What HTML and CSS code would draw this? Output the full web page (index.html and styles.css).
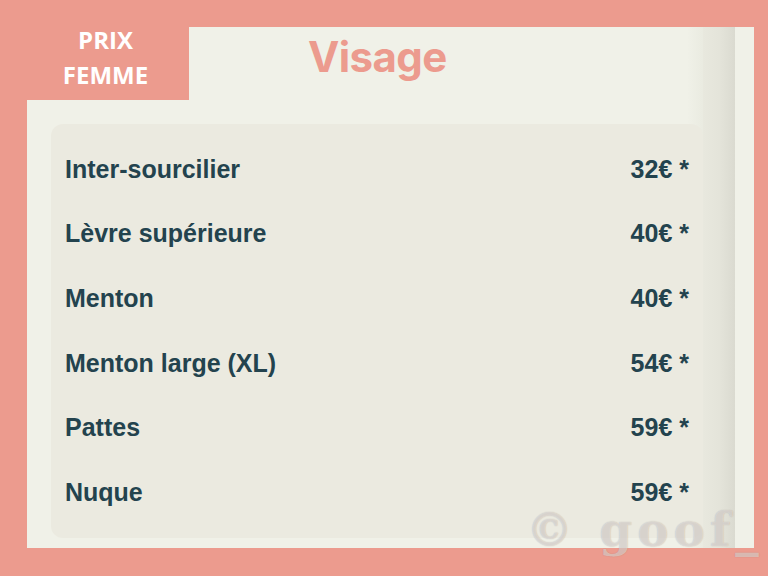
FILE: index.html
```html
<!DOCTYPE html>
<html lang="fr">
<head>
<meta charset="utf-8">
<title>Prix femme - Visage</title>
<link rel="stylesheet" href="styles.css">
</head>
<body>
<div class="frame">
  <div class="panel">
    <div class="main">
      <header class="header">
        <div class="label"><span class="label-text">PRIX<br>FEMME</span></div>
        <h1 class="title">Visage</h1>
      </header>
      <ul class="card">
        <li class="row"><span class="name">Inter-sourcilier</span><span class="price">32€ *</span></li>
        <li class="row"><span class="name">Lèvre supérieure</span><span class="price">40€ *</span></li>
        <li class="row"><span class="name">Menton</span><span class="price">40€ *</span></li>
        <li class="row"><span class="name">Menton large (XL)</span><span class="price">54€ *</span></li>
        <li class="row"><span class="name">Pattes</span><span class="price">59€ *</span></li>
        <li class="row"><span class="name">Nuque</span><span class="price">59€ *</span></li>
      </ul>
    </div>
    <div class="track"></div>
  </div>
</div>
<div class="watermark">© goof_</div>
</body>
</html>
```
FILE: styles.css
```css
html, body {
  margin: 0;
  padding: 0;
}
body {
  width: 768px;
  height: 576px;
  background: #ec9b8e;
  overflow: hidden;
  position: relative;
}
.frame {
  padding: 27px 14px 28px 27px;
}
.panel {
  display: flex;
  height: 521px;
  background: #f0f1e8;
}
.main {
  width: 676px;
  display: flex;
  flex-direction: column;
  background: linear-gradient(to right, rgba(0,0,0,0) 0, rgba(0,0,0,0) 660px, rgba(120,120,90,0.05) 676px);
}
.track {
  width: 32px;
  background: linear-gradient(to right, #e8e8de 0, #e4e4da 50%, #dadad0 100%);
}
.header {
  display: flex;
  align-items: flex-start;
  height: 97px;
}
.label {
  width: 162px;
  height: 73px;
  background: #ec9b8e;
  color: #ffffff;
  font-family: "Open Sans", sans-serif;
  font-weight: 700;
  font-size: 24px;
  line-height: 35px;
  text-align: center;
  padding-right: 5px;
  box-sizing: border-box;
}
.label-text {
  display: block;
  margin-top: -5px;
}
.title {
  margin: 0 0 0 119px;
  font-family: Inter, sans-serif;
  font-weight: 700;
  font-size: 42px;
  line-height: 42px;
  padding-top: 9px;
  letter-spacing: -0.6px;
  color: #ec9b8e;
}
.card {
  list-style: none;
  margin: 0 0 0 24px;
  padding: 13px 14px;
  background: #ebeae0;
  border-radius: 12px;
  height: 414px;
  box-sizing: border-box;
}
.row {
  display: flex;
  justify-content: space-between;
  align-items: center;
  height: 64.6px;
  font-family: "Liberation Sans", Arial, sans-serif;
  font-weight: 700;
  font-size: 25px;
  color: #23434e;
}
.watermark {
  position: absolute;
  left: 526px;
  top: 511px;
  font-family: "DejaVu Serif", serif;
  font-weight: 700;
  font-size: 47px;
  line-height: 38px;
  letter-spacing: 5px;
  color: rgba(255, 255, 255, 0.45);
  text-shadow: 0 0 1px rgba(110, 90, 80, 0.4);
  white-space: nowrap;
}
```
